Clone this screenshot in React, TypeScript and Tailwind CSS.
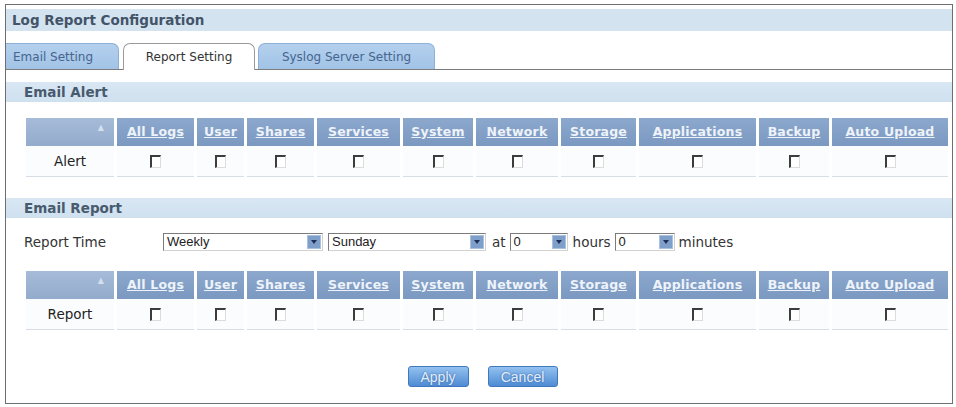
const columns = [
  { label: "All Logs", w: "w-[77px]" },
  { label: "User", w: "w-[47px]" },
  { label: "Shares", w: "w-[67px]" },
  { label: "Services", w: "w-[83px]" },
  { label: "System", w: "w-[70px]" },
  { label: "Network", w: "w-[82px]" },
  { label: "Storage", w: "w-[75px]" },
  { label: "Applications", w: "w-[117px]" },
  { label: "Backup", w: "w-[70px]" },
  { label: "Auto Upload", w: "w-[116px]" },
];

const CheckBox = () => (
  <span className="block w-[11px] h-[13px] bg-white border-t-2 border-l-2 border-r border-b border-t-[#3c3c3c] border-l-[#3c3c3c] border-r-[#dcdcdc] border-b-[#dcdcdc]" />
);

const LogTable = ({ rowLabel }: { rowLabel: string }) => (
  <div className="ml-[20px] flex flex-col">
    {/* header */}
    <div className="flex gap-[3px] h-[28px]">
      <div className="w-[88px] bg-gradient-to-b from-[#a6bbd8] to-[#93abcc] flex items-start justify-end pr-[10px] pt-[6px]">
        <span className="text-[8px] leading-none text-[#d4e0ee]">▲</span>
      </div>
      {columns.map((c) => (
        <div
          key={c.label}
          className={`${c.w} bg-gradient-to-b from-[#8ca8cd] to-[#7b98c1] flex items-center justify-center`}
        >
          <span className="text-[12.5px] font-bold underline text-[#eef3fa] tracking-[0.2px]">{c.label}</span>
        </div>
      ))}
    </div>
    {/* data row */}
    <div className="flex gap-[3px] h-[31px]">
      <div className="w-[88px] bg-[#fbfcfe] border-b border-[#d6dde6] flex items-center justify-center text-[13.5px] text-[#222]">
        {rowLabel}
      </div>
      {columns.map((c) => (
        <div
          key={c.label}
          className={`${c.w} bg-[#fbfcfe] border-b border-[#d6dde6] flex items-center justify-center`}
        >
          <CheckBox />
        </div>
      ))}
    </div>
  </div>
);

const Select = ({ w, value }: { w: string; value: string }) => (
  <div className={`${w} h-[18px] flex bg-white border-t border-l border-r border-b border-t-[#7b7b7b] border-l-[#7b7b7b] border-r-[#d2d2d2] border-b-[#d2d2d2]`}>
    <span className="flex-1 pl-[3px] text-[13px] leading-[16px] text-[#222] font-['Liberation_Sans',sans-serif]">{value}</span>
    <span className="w-[14px] h-[14px] mt-[1px] mr-[1px] bg-[#7f9fcb] border border-[#a9c0de] flex items-center justify-center">
      <span className="w-0 h-0 border-l-[3px] border-r-[3px] border-t-[4px] border-l-transparent border-r-transparent border-t-[#1d2f57]" />
    </span>
  </div>
);

const SectionBar = ({ title }: { title: string }) => (
  <div className="h-[20px] bg-gradient-to-b from-[#d9e7f3] to-[#cfe0ef] flex items-center pl-[18px]">
    <span className="text-[13.5px] font-bold text-[#485a6e]">{title}</span>
  </div>
);

export default function App() {
  return (
    <div className="w-[956px] h-[407px] bg-white overflow-hidden font-['DejaVu_Sans',sans-serif]">
      <div className="ml-[5px] mt-[4px] w-[948px] h-[400px] border border-[#6e6e6e] flex flex-col pt-[4px]">
        {/* title */}
        <div className="h-[22px] bg-[#d3e3f0] flex items-center pl-[6px]">
          <span className="text-[13.5px] font-bold text-[#435468]">Log Report Configuration</span>
        </div>

        {/* tabs */}
        <div className="mt-[13px] h-[26px] flex items-end border-b border-[#7d7d7d]">
          <div className="w-[113px] h-[26px] bg-gradient-to-b from-[#b4d0ee] to-[#a2c3e6] border-t border-r border-[#8db0d6] rounded-tr-[7px] flex items-center pl-[7px] text-[12px] text-[#45658f]">
            Email Setting
          </div>
          <div className="ml-[4px] w-[132px] h-[27px] -mb-px bg-white border border-b-0 border-[#9a9a9a] rounded-t-[7px] flex items-center justify-center text-[12px] text-[#333]">
            Report Setting
          </div>
          <div className="ml-[3px] w-[177px] h-[26px] bg-gradient-to-b from-[#b4d0ee] to-[#a2c3e6] border-t border-l border-r border-[#8db0d6] rounded-t-[7px] flex items-center justify-center text-[12px] text-[#45658f]">
            Syslog Server Setting
          </div>
        </div>

        <div className="mt-[12px]">
          <SectionBar title="Email Alert" />
        </div>
        <div className="mt-[16px]">
          <LogTable rowLabel="Alert" />
        </div>

        <div className="mt-[21px]">
          <SectionBar title="Email Report" />
        </div>

        {/* report time */}
        <div className="mt-[15px] h-[18px] flex items-center text-[13.5px] text-[#333]">
          <span className="ml-[18px] w-[139px]">Report Time</span>
          <Select w="w-[160px]" value="Weekly" />
          <span className="ml-[5px]">
            <Select w="w-[158px]" value="Sunday" />
          </span>
          <span className="ml-[6px] mr-[4px]">at</span>
          <Select w="w-[58px]" value="0" />
          <span className="ml-[5px] mr-[4px]">hours</span>
          <Select w="w-[60px]" value="0" />
          <span className="ml-[4px]">minutes</span>
        </div>

        <div className="mt-[20px]">
          <LogTable rowLabel="Report" />
        </div>

        {/* buttons */}
        <div className="mt-[36px] flex justify-center gap-[19px] pl-[7px]">
          <button className="w-[61px] h-[21px] rounded-[3px] border border-[#3f78bd] bg-gradient-to-b from-[#93c1f0] to-[#4f8bd3] text-[14px] text-[#e6eef9] font-['Liberation_Sans',sans-serif] [text-shadow:0_0_2px_#2c5fa0]">
            Apply
          </button>
          <button className="w-[70px] h-[21px] rounded-[3px] border border-[#3f78bd] bg-gradient-to-b from-[#93c1f0] to-[#4f8bd3] text-[14px] text-[#e6eef9] font-['Liberation_Sans',sans-serif] [text-shadow:0_0_2px_#2c5fa0]">
            Cancel
          </button>
        </div>
      </div>
    </div>
  );
}
